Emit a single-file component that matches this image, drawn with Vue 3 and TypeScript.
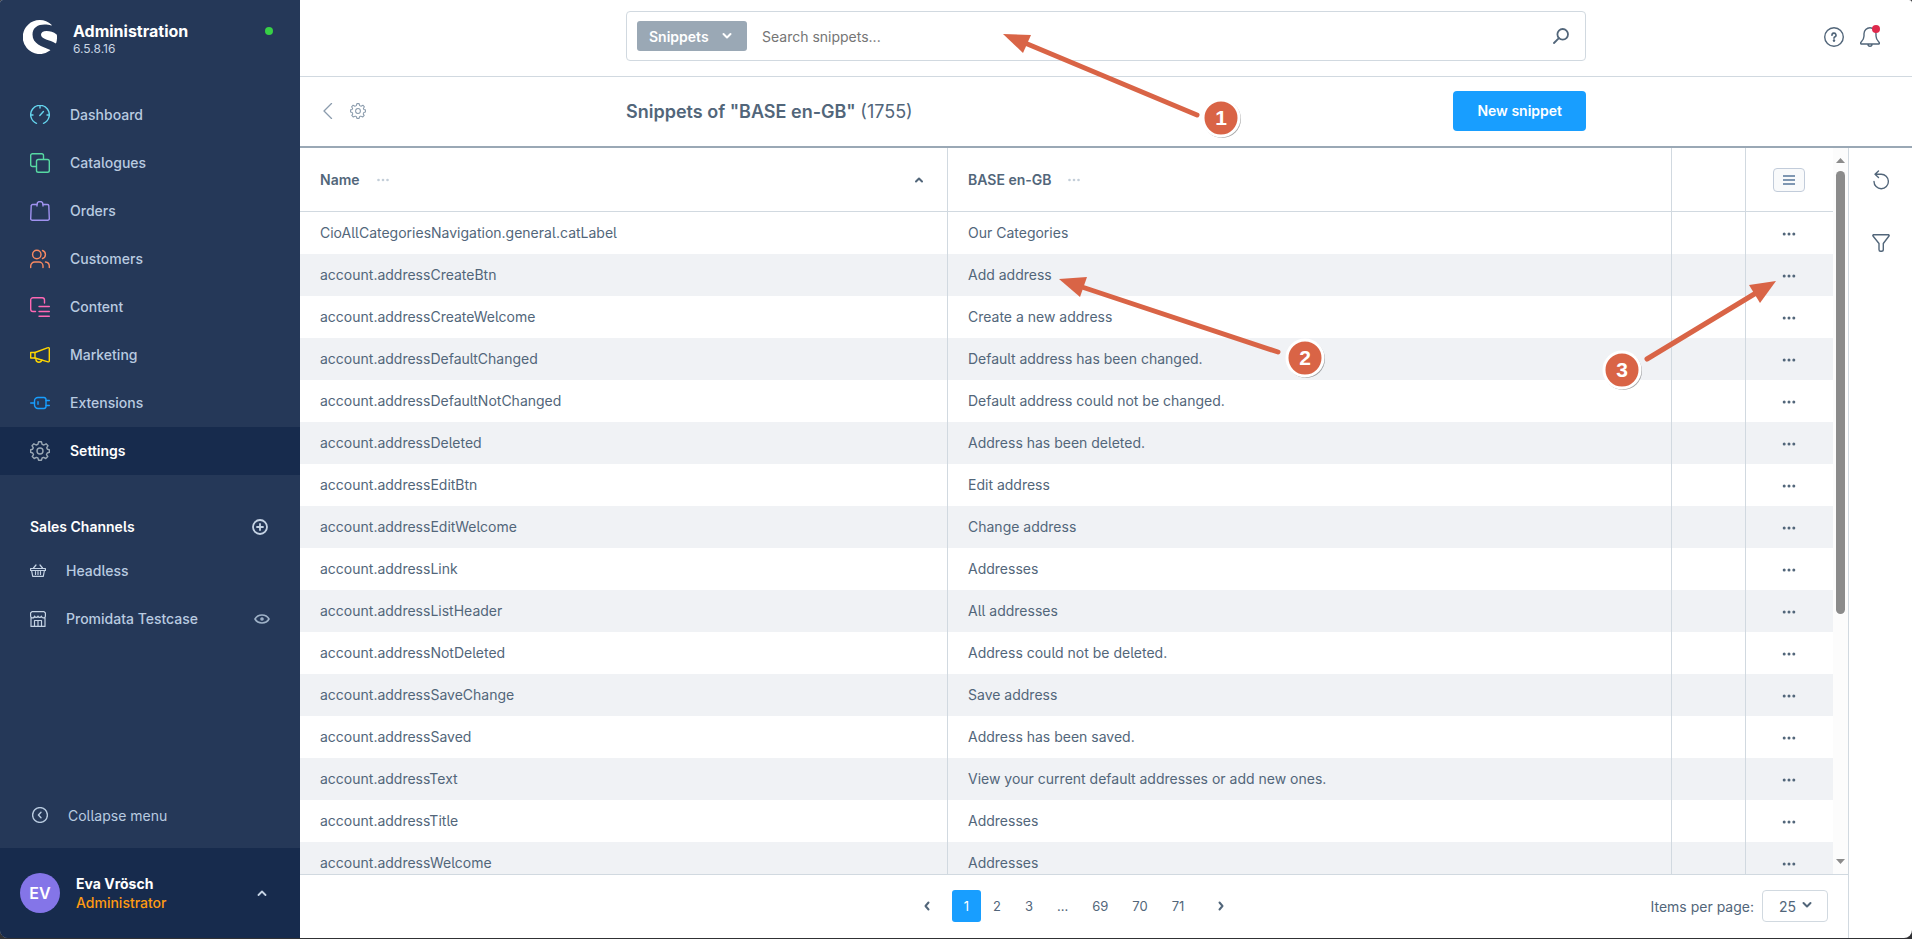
<script setup lang="ts">
import { ref } from 'vue'

interface NavItem { label: string; icon: string; color: string; active?: boolean }
interface Snippet { name: string; value: string }

const nav: NavItem[] = [
  { label: 'Dashboard', icon: 'gauge', color: 'cyan' },
  { label: 'Catalogues', icon: 'products', color: 'green' },
  { label: 'Orders', icon: 'bag', color: 'violet' },
  { label: 'Customers', icon: 'users', color: 'orange' },
  { label: 'Content', icon: 'content', color: 'pink' },
  { label: 'Marketing', icon: 'megaphone', color: 'yellow' },
  { label: 'Extensions', icon: 'plug', color: 'blue' },
  { label: 'Settings', icon: 'cog', color: 'grey', active: true },
]

const icons: Record<string, string[]> = {
  gauge: ['M6.5 18.3 A9.3 9.3 0 1 1 13.5 18.3', 'M9.8 10.4 L13.4 6.6', 'M10 1 V3', 'M1 10 H3', 'M17 10 H19'],
  products: ['M6 13.5 H2.5 A1.8 1.8 0 0 1 .7 11.7 V2.5 A1.8 1.8 0 0 1 2.5 .7 H11.7 A1.8 1.8 0 0 1 13.5 2.5 V6', 'M8.3 6.5 H17.5 A1.8 1.8 0 0 1 19.3 8.3 V17.5 A1.8 1.8 0 0 1 17.5 19.3 H8.3 A1.8 1.8 0 0 1 6.5 17.5 V8.3 A1.8 1.8 0 0 1 8.3 6.5 Z'],
  bag: ['M5 3.5 H2.6 A1.4 1.4 0 0 0 1.2 4.9 L.7 17.7 A1.6 1.6 0 0 0 2.3 19.3 H17.7 A1.6 1.6 0 0 0 19.3 17.7 L18.8 4.9 A1.4 1.4 0 0 0 17.4 3.5 H15', 'M7 5 V3.5 A3 3 0 0 1 13 3.5 V5', 'M5 3.5 H7 M13 3.5 H15'],
  users: ['M11 5.5 A4.2 4.2 0 1 1 2.6 5.5 A4.2 4.2 0 1 1 11 5.5 Z', 'M12.5 1.5 A4.2 4.2 0 0 1 12.5 9.5', 'M.7 18.5 V17 A4 4 0 0 1 4.7 13 H9 A4 4 0 0 1 13 17 V18.5', 'M15.5 13 A4.2 4.2 0 0 1 19.3 17 V18.5'],
  content: ['M5.5 14.5 H3 A2.3 2.3 0 0 1 .7 12.2 V3 A2.3 2.3 0 0 1 3 .7 H12.2 A2.3 2.3 0 0 1 14.5 3 V6', 'M9 9.5 H19.300', 'M9 14.5 H19.300', 'M9 19.300 H19.300'],
  megaphone: ['M.7 7.5 H5 V13 H.7 Z', 'M5 7.5 L18 2.7 A.9 .9 0 0 1 19.3 3.6 V16 A.9 .9 0 0 1 18 16.8 L5 13', 'M6 13.4 V15 A3 3 0 0 0 11.8 15'],
  plug: ['M.7 10 H4.5', 'M8 4.5 H14 A2.3 2.3 0 0 1 16 6.8 V13.2 A2.3 2.3 0 0 1 14 15.5 H8 A3.5 3.5 0 0 1 4.5 12 V8 A3.5 3.5 0 0 1 8 4.5 Z', 'M16 7.5 H19.300', 'M16 12.5 H19.300', 'M8 8.8 V11.2'],
  cog: ['M8.6 .8 H11.4 L12.1 3.3 L13.9 4 L16.1 2.8 L18 4.7 L16.7 6.9 L17.4 8.2 L19.3 8.6 V11.4 L17.3 12 L16.5 13.6 L17.8 15.6 L15.8 17.5 L13.6 16.4 L12.1 17 L11.4 19.2 H8.6 L7.9 17 L6.4 16.4 L4.2 17.5 L2.2 15.6 L3.5 13.6 L2.7 12 L.7 11.4 V8.6 L2.6 8.2 L3.3 6.9 L2 4.7 L3.9 2.8 L6.1 4 L7.9 3.3 Z', 'M13 10 A3 3 0 1 1 7 10 A3 3 0 1 1 13 10 Z'],
}

const snippets: Snippet[] = [
  { name: 'CioAllCategoriesNavigation.general.catLabel', value: 'Our Categories' },
  { name: 'account.addressCreateBtn', value: 'Add address' },
  { name: 'account.addressCreateWelcome', value: 'Create a new address' },
  { name: 'account.addressDefaultChanged', value: 'Default address has been changed.' },
  { name: 'account.addressDefaultNotChanged', value: 'Default address could not be changed.' },
  { name: 'account.addressDeleted', value: 'Address has been deleted.' },
  { name: 'account.addressEditBtn', value: 'Edit address' },
  { name: 'account.addressEditWelcome', value: 'Change address' },
  { name: 'account.addressLink', value: 'Addresses' },
  { name: 'account.addressListHeader', value: 'All addresses' },
  { name: 'account.addressNotDeleted', value: 'Address could not be deleted.' },
  { name: 'account.addressSaveChange', value: 'Save address' },
  { name: 'account.addressSaved', value: 'Address has been saved.' },
  { name: 'account.addressText', value: 'View your current default addresses or add new ones.' },
  { name: 'account.addressTitle', value: 'Addresses' },
  { name: 'account.addressWelcome', value: 'Addresses' },
]

const pages = ['1', '2', '3', '...', '69', '70', '71']
const current = ref('1')
const term = ref('')
const limit = ref('25')

const callouts = [
  { n: 1, x: 1221, y: 118, tail: [1197, 115], neck: [1025, 43], head: '1003,34 1031,35 1023,53' },
  { n: 2, x: 1305, y: 358, tail: [1278, 352], neck: [1082, 287], head: '1059,279 1087,277 1080,297' },
  { n: 3, x: 1622, y: 370, tail: [1647, 359], neck: [1756, 293], head: '1776,281 1749,285 1760,303' },
]
</script>

<template>
  <div class="window">
    <div class="app">
      <aside class="sidebar">
        <header class="brand">
          <svg class="logo" viewBox="0 0 34 34" aria-hidden="true">
            <path d="M28.5 4.8 A17 17 0 1 0 27 30.6 C27.4 30.3 27.3 29.9 26.8 29.7 C19 26.4 9.5 24 9.5 14.5 C9.5 7.5 15 4.4 21.5 4.4 C24 4.4 26.200 4.700 28.200 5.500 C28.700 5.600 28.900 5.200 28.500 4.800 Z" />
            <path d="M33.600 14.500 C30.500 11.800 27 11 23.500 11 C20 11 18 12.400 18 14.700 C18 19.500 27 19.500 32.300 23.300 C32.700 23.500 33.100 23.400 33.200 23 C34 20.400 34.200 17.500 33.900 15.200 C33.900 14.900 33.800 14.700 33.600 14.500 Z" />
          </svg>
          <div class="brand-text">
            <span class="brand-name">Administration</span>
            <span class="brand-version">6.5.8.16</span>
          </div>
          <span class="status"></span>
        </header>
        <nav class="nav">
          <a v-for="item in nav" :key="item.label" href="#" class="nav-item" :class="{ active: item.active }">
            <svg class="stroke" :class="item.color" width="20" height="20" viewBox="0 0 20 20" aria-hidden="true">
              <path v-for="d in icons[item.icon]" :key="d" :d="d" />
            </svg>
            <span class="label">{{ item.label }}</span>
          </a>
        </nav>
        <section class="channels">
          <div class="channels-head">
            <h2 class="label">Sales Channels</h2>
            <button type="button" class="bare light" aria-label="Add sales channel">
              <svg class="stroke bold" width="16" height="16" viewBox="0 0 16 16"><circle cx="8" cy="8" r="7" /><path d="M8 5 V11 M5 8 H11" /></svg>
            </button>
          </div>
          <a href="#" class="channel">
            <svg class="stroke light" width="16" height="16" viewBox="0 0 16 16" aria-hidden="true"><path d="M.6 5.500 H15.400 V7.500 H.6 Z M1.600 7.500 L2.700 13.400 H13.300 L14.400 7.500 M3.500 5 L6 2 M12.500 5 L10 2 M5.500 8.500 V11.500 M8 8.500 V11.500 M10.500 8.500 V11.500" /></svg>
            <span class="label">Headless</span>
          </a>
          <a href="#" class="channel">
            <svg class="stroke light" width="16" height="16" viewBox="0 0 16 16" aria-hidden="true"><path d="M2 .6 H14 L15.400 2 V5 A1.800 1.800 0 0 1 11.500 5 A1.800 1.800 0 0 1 8 5 A1.800 1.800 0 0 1 4.500 5 A1.800 1.800 0 0 1 .6 5 V2 Z M1 7 V15.400 H15 V7 M4.500 15 V9.500 H11.500 V15 M8 9.500 V15" /></svg>
            <span class="label grow">Promidata Testcase</span>
            <svg class="stroke eye" width="16" height="16" viewBox="0 0 16 16" aria-hidden="true"><path d="M1 8 C4 2.700 12 2.700 15 8 C12 13.300 4 13.300 1 8 Z" /><circle cx="8" cy="8" r="1" /></svg>
          </a>
        </section>
        <button type="button" class="collapse">
          <svg class="stroke" width="16" height="16" viewBox="0 0 16 16" aria-hidden="true"><circle cx="8" cy="8" r="7.400" /><path d="M9 5.300 L6.400 8 L9 10.700" /></svg>
          <span>Collapse menu</span>
        </button>
        <button type="button" class="user">
          <span class="avatar">EV</span>
          <span class="user-text"><span class="user-name">Eva Vrösch</span><span class="user-role">Administrator</span></span>
          <svg class="stroke bold light" width="10" height="6" viewBox="0 0 10 6" aria-hidden="true"><path d="M1.500 5 L5 1.500 L8.500 5" /></svg>
        </button>
      </aside>

      <main class="main">
        <header class="topbar">
          <form class="search" role="search" @submit.prevent>
            <button type="button" class="scope">
              <span>Snippets</span>
              <svg class="stroke heavy" width="10" height="8" viewBox="0 0 10 8" aria-hidden="true"><path d="M1.500 2 L5 5.500 L8.500 2" /></svg>
            </button>
            <input v-model="term" type="text" placeholder="Search snippets..." aria-label="Search snippets" />
            <button type="submit" class="bare" aria-label="Search">
              <svg class="stroke bold" width="16" height="16" viewBox="0 0 16 16"><circle cx="9.700" cy="6.300" r="5.300" /><path d="M5.900 10.100 L1 15" /></svg>
            </button>
          </form>
          <div class="top-actions">
            <button type="button" class="bare" aria-label="Help">
              <svg class="stroke" width="20" height="20" viewBox="0 0 20 20"><circle cx="10" cy="10" r="9.300" /><path class="thick" d="M8 8.300 A2 2 0 1 1 10.600 10 Q10 10.300 10 11.200" /><circle class="fill" cx="10" cy="13.600" r=".6" /></svg>
            </button>
            <button type="button" class="bare bell" aria-label="Notifications">
              <svg class="stroke" width="20" height="20" viewBox="0 0 20 20"><path d="M1 17 C.5 16.500 .6 15.600 1.200 15 C3 13.200 4 11.500 4 9 V6.700 A6 6 0 0 1 16 6.700 V9 C16 11.500 17 13.200 18.800 15 C19.400 15.600 19.500 16.500 19 17 Z M8 17.300 A2 2 0 0 0 12 17.300" /></svg>
              <span class="dot"></span>
            </button>
          </div>
        </header>

        <div class="smartbar">
          <div class="smart-left">
            <button type="button" class="bare muted" aria-label="Back"><svg class="stroke" width="10" height="16" viewBox="0 0 10 16"><path d="M8.500 .5 L1 8 L8.500 15.500" /></svg></button>
            <button type="button" class="bare muted" aria-label="Settings"><svg class="stroke" width="16" height="16" viewBox="0 0 20 20"><path v-for="d in icons.cog" :key="d" :d="d" /></svg></button>
          </div>
          <div class="smart-center">
            <h1>Snippets of "BASE en-GB" <span>(1755)</span></h1>
            <button type="button" class="primary">New snippet</button>
          </div>
        </div>

        <div class="content">
          <div class="listing">
            <div class="scroller">
              <div class="table-clip">
                <table>
                  <colgroup><col class="c-name" /><col class="c-value" /><col class="c-blank" /><col class="c-actions" /></colgroup>
                  <thead>
                    <tr>
                      <th scope="col">
                        <div class="th">
                          <span>Name</span>
                          <svg class="dots faint" width="12" height="4" viewBox="0 0 12 4" aria-hidden="true"><circle cx="1.500" cy="2" r="1.300" /><circle cx="6" cy="2" r="1.300" /><circle cx="10.500" cy="2" r="1.300" /></svg>
                          <svg class="stroke heavy sort" width="10" height="6" viewBox="0 0 10 6" aria-hidden="true"><path d="M2 4.500 L5 1.500 L8 4.500" /></svg>
                        </div>
                      </th>
                      <th scope="col">
                        <div class="th">
                          <span>BASE en-GB</span>
                          <svg class="dots faint" width="12" height="4" viewBox="0 0 12 4" aria-hidden="true"><circle cx="1.500" cy="2" r="1.300" /><circle cx="6" cy="2" r="1.300" /><circle cx="10.500" cy="2" r="1.300" /></svg>
                        </div>
                      </th>
                      <th></th>
                      <th class="center">
                        <button type="button" class="columns" aria-label="List settings"><svg width="12" height="10" viewBox="0 0 12 10"><path d="M0 1 H12 M0 5 H12 M0 9 H12" /></svg></button>
                      </th>
                    </tr>
                  </thead>
                  <tbody>
                    <tr v-for="s in snippets" :key="s.name">
                      <td>{{ s.name }}</td>
                      <td>{{ s.value }}</td>
                      <td></td>
                      <td class="center">
                        <button type="button" class="bare" aria-label="Row actions"><svg class="dots" width="14" height="4" viewBox="0 0 14 4"><circle cx="2.200" cy="2" r="1.500" /><circle cx="7" cy="2" r="1.500" /><circle cx="11.800" cy="2" r="1.500" /></svg></button>
                      </td>
                    </tr>
                  </tbody>
                </table>
              </div>
              <div class="scrollbar">
                <svg width="9" height="5" viewBox="0 0 9 5" aria-hidden="true"><path d="M0 5 L4.500 0 L9 5 Z" /></svg>
                <div class="track"><div class="thumb"></div></div>
                <svg width="9" height="5" viewBox="0 0 9 5" aria-hidden="true"><path d="M0 0 L4.500 5 L9 0 Z" /></svg>
              </div>
            </div>
            <footer class="pagination">
              <div></div>
              <div class="pager">
                <button type="button" class="bare arrow" aria-label="Previous page"><svg class="stroke heavy" width="6" height="10" viewBox="0 0 6 10"><path d="M4.500 1.500 L1.500 5 L4.500 8.500" /></svg></button>
                <template v-for="p in pages" :key="p">
                  <span v-if="p === '...'" class="page">{{ p }}</span>
                  <button v-else type="button" class="page" :class="{ current: p === current }" @click="current = p">{{ p }}</button>
                </template>
                <button type="button" class="bare arrow" aria-label="Next page"><svg class="stroke heavy" width="6" height="10" viewBox="0 0 6 10"><path d="M1.500 1.500 L4.500 5 L1.500 8.500" /></svg></button>
              </div>
              <div class="per-page">
                <label for="limit">Items per page:</label>
                <div class="select">
                  <select id="limit" v-model="limit"><option>10</option><option>25</option><option>50</option></select>
                  <svg class="stroke heavy" width="10" height="8" viewBox="0 0 10 8" aria-hidden="true"><path d="M1.500 2 L5 5.500 L8.500 2" /></svg>
                </div>
              </div>
            </footer>
          </div>
          <aside class="tools">
            <button type="button" class="bare" aria-label="Refresh"><svg class="stroke" width="18" height="20" viewBox="0 0 18 20"><path d="M2 11.500 A7.200 7.200 0 1 0 9 4.300 H3 M6.500 1 L3 4.300 L6.500 7.500" /></svg></button>
            <button type="button" class="bare" aria-label="Filter"><svg class="stroke" width="18" height="18" viewBox="0 0 18 18"><path d="M1.500 .7 H16.500 Q17.500 1.200 17 2 L11.300 9.500 V15.500 Q11.300 17.300 9.500 17.300 H8.500 Q7 17.300 7 15.500 V9.500 L1 2 Q.5 1.200 1.500 .7 Z" /></svg></button>
          </aside>
        </div>
      </main>
    </div>

    <svg class="callouts" width="1912" height="420" viewBox="0 0 1912 420">
      <g v-for="c in callouts" :key="c.n">
        <line :x1="c.tail[0]" :y1="c.tail[1]" :x2="c.neck[0]" :y2="c.neck[1]" />
        <polygon :points="c.head" />
        <circle class="shade" :cx="c.x + 1" :cy="c.y + 1" r="19" />
        <circle class="ring" :cx="c.x" :cy="c.y" r="18" />
        <text :x="c.x" :y="c.y + 7">{{ c.n }}</text>
      </g>
    </svg>
  </div>
</template>

<style>
html, body, #app { height: 100%; }
body { background: #303134; overflow: hidden; }
</style>

<style scoped>
.window { position: relative; height: 100vh; box-sizing: border-box; padding-bottom: 1px; font-family: Inter, "Liberation Sans", sans-serif; font-feature-settings: "cv05"; font-size: 14px; color: #52667a; }
.window *, .window *::before { box-sizing: border-box; }
.app { display: flex; height: 100%; background: #fff; border-radius: 3px 3px 8px 8px; overflow: hidden; }
button, input, select { font: inherit; font-feature-settings: inherit; color: inherit; border: 0; background: none; padding: 0; margin: 0; }
a { color: inherit; text-decoration: none; }
svg { display: block; flex: none; }
.bare { display: flex; align-items: center; justify-content: center; }
.stroke { fill: none; stroke: currentColor; stroke-width: 1.4; stroke-linecap: round; stroke-linejoin: round; }
.bold { stroke-width: 1.8; }
.heavy { stroke-width: 2; }
.dots { fill: #52667a; }
.faint { fill: #c3ced8; }
.fill { fill: currentColor; }
.light { color: #c5d3e4; }
.grow { flex: 1; }
.label { padding-bottom: 2px; }

.sidebar { width: 300px; flex: none; display: flex; flex-direction: column; background: #253858; color: #b9cbe0; }
.brand { display: flex; align-items: flex-start; padding: 20px 27px 0 23px; height: 91px; }
.logo { width: 34px; height: 34px; fill: #fff; }
.brand-text { display: flex; flex-direction: column; margin-left: 16px; flex: 1; }
.brand-name { font-size: 16px; font-weight: 700; line-height: 22px; color: #fff; }
.brand-version { font-size: 12px; line-height: 14px; color: #c9d5e4; }
.status { width: 8px; height: 8px; margin-top: 7px; border-radius: 50%; background: #37d046; }
.nav { display: flex; flex-direction: column; }
.nav-item { display: flex; align-items: center; gap: 20px; height: 48px; padding-left: 30px; font-weight: 500; }
.active { background: #172b4d; color: #fff; font-weight: 600; }
.cyan { color: #65d5ee; }
.green { color: #57d9a3; }
.violet { color: #a092f0; }
.orange { color: #f88962; }
.pink { color: #ff68b4; }
.yellow { color: #ffd700; }
.blue { color: #189eff; }
.grey { color: #9aa8b5; }
.channels { margin-top: 36px; }
.channels-head { display: flex; align-items: center; justify-content: space-between; height: 32px; margin-bottom: 4px; padding: 0 32px 0 30px; }
h2 { margin: 0; font-size: 14px; font-weight: 600; color: #fff; }
.channel { display: flex; align-items: center; gap: 20px; height: 48px; padding: 0 30px; font-weight: 500; }
.channel .stroke { stroke-width: 1.2; }
.channel .eye { color: #9fb2c8; stroke-width: 1.6; }
.collapse { display: flex; align-items: center; gap: 20px; height: 66px; margin-top: auto; padding: 0 32px; }
.user { display: flex; align-items: center; height: 90px; padding: 0 33px 0 20px; background: #172b4d; text-align: left; }
.avatar { display: flex; align-items: center; justify-content: center; width: 40px; height: 40px; border-radius: 50%; background: #8475e8; color: #fff; font-size: 16px; font-weight: 600; }
.user-text { display: flex; flex-direction: column; flex: 1; margin-left: 16px; line-height: 19px; }
.user-name { color: #fff; font-weight: 700; }
.user-role { color: #ff9a12; font-weight: 500; }

.main { flex: 1; min-width: 0; display: flex; flex-direction: column; }
.topbar { display: grid; grid-template-columns: 1fr minmax(0, 960px) 1fr; height: 77px; padding-top: 11px; border-bottom: 1px solid #d1d9e0; }
.search { grid-column: 2; display: flex; align-items: center; height: 50px; padding: 0 16px 0 10px; border: 1px solid #d1d9e0; border-radius: 4px; }
.scope { display: flex; align-items: center; justify-content: space-between; width: 110px; height: 30px; padding: 0 15px 0 12px; border-radius: 3px; background: #9aa8b5; color: #fff; font-weight: 600; }
.search input { flex: 1; min-width: 0; height: 40px; padding: 0 15px; outline: none; }
.search input::placeholder { color: #757575; opacity: 1; }
.top-actions { display: flex; align-items: center; justify-content: flex-end; gap: 16px; height: 52px; padding-right: 32px; }
.bell { position: relative; }
.dot { position: absolute; top: -2px; right: 0; width: 8px; height: 8px; border-radius: 50%; background: #de294c; }
.thick { stroke-width: 1.6; }
.smartbar { display: grid; grid-template-columns: 1fr minmax(0, 960px) 1fr; align-items: center; height: 71px; padding-bottom: 2px; border-bottom: 2px solid #9aa8b5; }
.smart-left { display: flex; align-items: center; gap: 17px; padding-left: 23px; }
.muted { color: #8a9bac; }
.smart-left .stroke { stroke-width: 1.3; }
.smart-center { display: flex; align-items: center; justify-content: space-between; }
h1 { margin: 0; padding-top: 2px; font-size: 18px; font-weight: 600; }
h1 span { font-weight: 400; }
.primary { height: 40px; padding: 0 24px; border-radius: 4px; background: #189eff; color: #fff; font-weight: 600; }

.content { flex: 1; min-height: 0; display: flex; }
.listing { flex: 1; min-width: 0; display: flex; flex-direction: column; }
.scroller { flex: 1; min-height: 0; display: flex; }
.table-clip { flex: 1; min-width: 0; overflow: hidden; }
table { width: 100%; table-layout: fixed; border-collapse: separate; border-spacing: 0; }
.c-name { width: 648px; }
.c-blank { width: 74px; }
.c-actions { width: 87px; }
th, td { padding: 0 20px; text-align: left; border-right: 1px solid #d1d9e0; }
th:last-child, td:last-child { border-right: 0; }
th { height: 64px; font-weight: 600; border-bottom: 1px solid #d1d9e0; }
td { height: 42px; padding-bottom: 2px; }
tbody tr:nth-child(even) { background: #f0f2f5; }
th.center { padding: 0 1px 0 0; }
td.center { padding: 2px 1px 0 0; }
.center > button { margin: 0 auto; }
.th { display: flex; align-items: center; gap: 17px; }
.sort { margin-left: auto; margin-right: 3px; }
.columns { display: flex; align-items: center; justify-content: center; width: 32px; height: 24px; border: 1px solid #c2ccda; border-radius: 4px; background: #f9fafb; }
.columns path { stroke: #7f97b2; stroke-width: 2; }
.scrollbar { display: flex; flex-direction: column; align-items: center; width: 15px; padding: 10px 0; background: #fcfcfc; }
.scrollbar svg { fill: #8b8b8b; }
.track { flex: 1; width: 9px; padding-top: 8px; }
.thumb { height: 64.4%; border-radius: 5px; background: #8b8b8b; }
.pagination { display: grid; grid-template-columns: 1fr auto 1fr; align-items: center; height: 64px; padding-bottom: 1px; border-top: 1px solid #d1d9e0; }
.pager { display: flex; align-items: center; font-size: 13px; }
.page { display: flex; align-items: center; justify-content: center; height: 32px; padding: 0 12px; }
.current { background: #189eff; color: #fff; border-radius: 3px; }
.arrow { width: 50px; height: 32px; }
.per-page { display: flex; align-items: center; justify-content: flex-end; gap: 8px; padding-right: 20px; }
.select { position: relative; }
select { appearance: none; width: 66px; height: 32px; padding: 0 16px; border: 1px solid #d1d9e0; border-radius: 4px; }
.select svg { position: absolute; right: 16px; top: 11px; pointer-events: none; }
.tools { width: 64px; display: flex; flex-direction: column; align-items: center; gap: 44px; padding-top: 22px; border-left: 1px solid #d1d9e0; }

.callouts { position: absolute; left: 0; top: 0; pointer-events: none; }
.callouts line { stroke: #d96446; stroke-width: 5; stroke-linecap: round; }
.callouts polygon { fill: #d96446; }
.shade { fill: #00000055; }
.ring { fill: #d96446; stroke: #fff; stroke-width: 3; }
.callouts text { fill: #fff; font-family: "Liberation Sans", Arial, sans-serif; font-size: 21px; font-weight: 700; text-anchor: middle; }
</style>
